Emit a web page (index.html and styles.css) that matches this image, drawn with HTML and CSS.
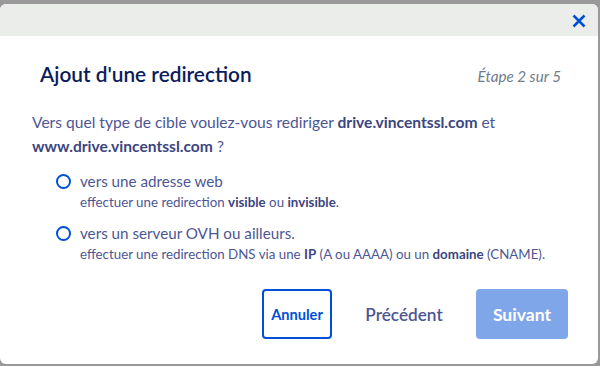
FILE: index.html
```html
<!DOCTYPE html>
<html lang="fr">
<head>
<meta charset="utf-8">
<link rel="stylesheet" href="styles.css">
</head>
<body>
<div class="dialog">
  <div class="dialog-head">
    <button class="close" aria-label="Fermer">
      <svg width="14" height="14" viewBox="0 0 14 14"><path d="M1.5 1.5 L12.5 12.5 M12.5 1.5 L1.5 12.5" stroke="#0050d7" stroke-width="2.5" fill="none"/></svg>
    </button>
  </div>
  <div class="dialog-body">
    <div class="title-row">
      <h2 class="title">Ajout d'une redirection</h2>
      <span class="step">Étape 2 sur 5</span>
    </div>
    <p class="question">Vers quel type de cible voulez-vous rediriger <b>drive.vincentssl.com</b> et <b>www.drive.vincentssl.com</b> ?</p>
    <div class="options">
      <label class="option">
        <span class="radio"></span>
        <span class="opt-text">
          <span class="opt-label">vers une adresse web</span>
          <span class="opt-desc">effectuer une redirection <b>visible</b> ou <b>invisible</b>.</span>
        </span>
      </label>
      <label class="option">
        <span class="radio"></span>
        <span class="opt-text">
          <span class="opt-label">vers un serveur OVH ou ailleurs.</span>
          <span class="opt-desc">effectuer une redirection DNS via une <b>IP</b> (A ou AAAA) ou un <b>domaine</b> (CNAME).</span>
        </span>
      </label>
    </div>
    <div class="actions">
      <button class="btn btn-outline">Annuler</button>
      <button class="btn btn-link">Précédent</button>
      <button class="btn btn-primary">Suivant</button>
    </div>
  </div>
</div>
</body>
</html>
```

FILE: styles.css
```css
* { box-sizing: border-box; }
html, body { margin: 0; padding: 0; }
body {
  width: 600px;
  height: 366px;
  background: #999;
  font-family: Lato, "Liberation Sans", sans-serif;
  padding-top: 4px;
  overflow: hidden;
}
.dialog {
  width: 598px;
  height: 360px;
  background: #fff;
  border-radius: 6px;
  overflow: hidden;
}
.dialog-head {
  height: 32px;
  background: #ebedeb;
  display: flex;
  justify-content: flex-end;
  align-items: center;
}
.close {
  border: 0;
  background: transparent;
  padding: 0;
  margin-right: 12px;
  margin-top: 1px;
  width: 14px;
  height: 14px;
  display: flex;
}
.dialog-body {
  padding: 26px 30px 0 32px;
}
.title-row {
  display: flex;
  justify-content: space-between;
  align-items: baseline;
  padding-left: 8px;
  padding-right: 7px;
}
.title {
  margin: 0;
  font-size: 20.8px;
  font-weight: 600;
  color: #0b1c5c;
  line-height: 24px;
}
.step {
  font-style: italic;
  font-size: 15.2px;
  color: #717c8a;
}
.question {
  margin: 24px 0 0;
  font-size: 15.6px;
  line-height: 24px;
  color: #4d5693;
}
.question b { color: #3c4580; }
.options {
  margin-top: 12px;
  padding-left: 24px;
  display: flex;
  flex-direction: column;
  gap: 10px;
}
.option {
  display: flex;
  align-items: flex-start;
  gap: 9px;
}
.radio {
  width: 15px;
  height: 15px;
  border: 2px solid #0050d7;
  border-radius: 50%;
  margin-top: 4px;
  flex: none;
}
.opt-text { display: flex; flex-direction: column; }
.opt-label {
  font-size: 15.2px;
  line-height: 22px;
  color: #4d5693;
}
.opt-desc {
  font-size: 13.3px;
  line-height: 20px;
  color: #4d5693;
}
.opt-desc b { color: #3c4580; }
.actions {
  margin-top: 25px;
  display: flex;
  justify-content: flex-end;
  align-items: center;
}
.btn {
  font-family: inherit;
  height: 50px;
  border-radius: 4px;
  font-weight: 700;
  cursor: pointer;
  padding: 0;
}
.btn-outline {
  width: 70px;
  border: 2px solid #0050d7;
  background: #fff;
  color: #0050d7;
  font-size: 14.6px;
}
.btn-link {
  width: 144px;
  border: 0;
  background: transparent;
  color: #4d5693;
  font-size: 17.2px;
  font-weight: 600;
}
.btn-primary {
  width: 92px;
  border: 0;
  background: #7fa6e8;
  color: #fff;
  font-size: 17.6px;
}
```
